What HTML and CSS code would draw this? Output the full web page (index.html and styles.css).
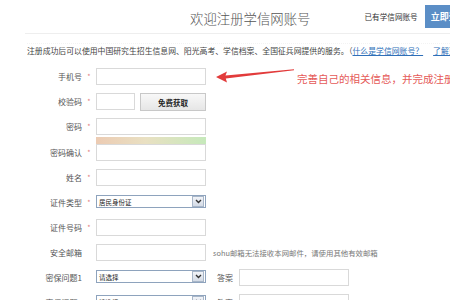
FILE: index.html
```html
<!DOCTYPE html>
<html>
<head>
  <link rel="stylesheet" href="styles.css">
</head>
<body>
  <div class="page">
    <div class="header">
      <h1 class="title">欢迎注册学信网账号</h1>
      <span class="has-account">已有学信网账号</span>
      <a class="login-btn">立即登录</a>
    </div>
    <p class="intro">注册成功后可以使用中国研究生招生信息网、阳光高考、学信档案、全国征兵网提供的服务。（<a class="link">什么是学信网账号？</a><a class="link more">了解更多</a></p>

    <div class="form">
      <div class="row">
        <label class="label">手机号</label><span class="star">*</span>
        <input class="field" type="text">
      </div>
      <div class="row">
        <label class="label">校验码</label><span class="star">*</span>
        <input class="field short" type="text">
        <button class="code-btn">免费获取</button>
      </div>
      <div class="row pw-row">
        <label class="label">密码</label><span class="star">*</span>
        <div class="pw-col">
          <input class="field" type="password">
          <div class="strength"></div>
        </div>
      </div>
      <div class="row">
        <label class="label">密码确认</label><span class="star">*</span>
        <input class="field" type="password">
      </div>
      <div class="row">
        <label class="label">姓名</label><span class="star">*</span>
        <input class="field" type="text">
      </div>
      <div class="row">
        <label class="label">证件类型</label><span class="star">*</span>
        <div class="select"><span class="select-text">居民身份证</span><span class="select-arrow"><svg width="7" height="5" viewBox="0 0 7 5"><path d="M1 1l2.5 2.5L6 1" fill="none" stroke="#333" stroke-width="1.4"/></svg></span></div>
      </div>
      <div class="row">
        <label class="label">证件号码</label><span class="star">*</span>
        <input class="field" type="text">
      </div>
      <div class="row">
        <label class="label">安全邮箱</label><span class="star"></span>
        <input class="field" type="text">
        <span class="hint">sohu邮箱无法接收本网邮件，请使用其他有效邮箱</span>
      </div>
      <div class="row">
        <label class="label">密保问题1</label><span class="star"></span>
        <div class="select"><span class="select-text">请选择</span><span class="select-arrow"><svg width="7" height="5" viewBox="0 0 7 5"><path d="M1 1l2.5 2.5L6 1" fill="none" stroke="#333" stroke-width="1.4"/></svg></span></div>
        <span class="answer-label">答案</span>
        <input class="field" type="text">
      </div>
      <div class="row">
        <label class="label">密保问题2</label><span class="star"></span>
        <div class="select"><span class="select-text">请选择</span><span class="select-arrow"><svg width="7" height="5" viewBox="0 0 7 5"><path d="M1 1l2.5 2.5L6 1" fill="none" stroke="#333" stroke-width="1.4"/></svg></span></div>
        <span class="answer-label">答案</span>
        <input class="field" type="text">
      </div>
    </div>

    <!-- 标注：红色箭头和提示 -->
    <svg class="arrow" width="84" height="16" viewBox="0 0 84 16">
      <path d="M0 9L11 3.5L9.5 7.6L78 1.2L78 2.2L9.8 10.4L11 14.5Z" fill="#e23b3b"/>
    </svg>
    <span class="note">完善自己的相关信息，并完成注册</span>
  </div>
</body>
</html>
```

FILE: styles.css
```css
body {
  margin: 0;
  background: #fff;
  font-family: "Noto Sans CJK SC", "Liberation Sans", sans-serif;
  color: #555;
  overflow: hidden;
}
.page {
  position: relative;
  width: 450px;
  height: 300px;
}
.header {
  display: flex;
  align-items: center;
  height: 33px;
  margin-left: 25px;
  border-bottom: 1px solid #eee;
  white-space: nowrap;
}
.title {
  margin: 0 0 0 165px;
  font-size: 13.4px;
  font-weight: 300;
  color: #555;
  position: relative;
  top: 1px;
}
.has-account {
  margin-left: 54px;
  font-size: 7.6px;
  color: #333;
}
.login-btn {
  margin-left: 7px;
  align-self: flex-start;
  margin-top: 5px;
  height: 23px;
  line-height: 23px;
  padding: 0 8px 0 6px;
  background: #5b8ec6;
  color: #fff;
  font-size: 9px;
  font-weight: bold;
}
.intro {
  margin: 9px 0 0 27px;
  font-size: 7.85px;
  line-height: 11px;
  color: #444;
  white-space: nowrap;
  padding-top: 1px;
  border-top: 1px dotted #f3f3f3;
}
.link {
  color: #2f6fb8;
  text-decoration: underline;
}
.more {
  margin-left: 10px;
}
.form {
  margin-top: 12px;
}
.row {
  display: flex;
  align-items: flex-start;
  height: 25px;
}
.pw-row {
  height: 26px;
}
.label {
  width: 82px;
  text-align: right;
  font-size: 8px;
  line-height: 17px;
  color: #555;
}
.star {
  width: 14px;
  text-align: center;
  font-size: 7px;
  line-height: 17px;
  color: #e27c7c;
}
.field {
  box-sizing: border-box;
  width: 110px;
  height: 17px;
  margin: 0;
  padding: 0 3px;
  border: 1px solid #d9d9d9;
  border-radius: 0;
  background: #fff;
  outline: none;
}
.field.short {
  width: 39px;
}
.code-btn {
  box-sizing: border-box;
  width: 66px;
  height: 18px;
  margin: 0 0 0 5px;
  padding: 0;
  border: 1px solid #c8c8c8;
  border-radius: 0;
  background: linear-gradient(#f8f8f8, #e6e6e6);
  font-family: inherit;
  font-size: 7.5px;
  font-weight: bold;
  color: #222;
}
.pw-col {
  display: flex;
  flex-direction: column;
}
.strength {
  width: 110px;
  height: 7px;
  margin-top: 2px;
  background: linear-gradient(to right, #eccbb3, #e9e0c2 45%, #c6e9bb);
}
.select {
  box-sizing: border-box;
  display: flex;
  align-items: center;
  width: 110px;
  height: 13px;
  margin-top: 1px;
  border: 1px solid #8ea3bd;
  background: #fff;
}
.select-text {
  flex: 1;
  padding-left: 2px;
  font-size: 6.5px;
  color: #222;
}
.select-arrow {
  display: flex;
  align-items: center;
  justify-content: center;
  width: 10px;
  height: 9px;
  margin-right: 1px;
  border: 1px solid #a8b6c8;
  background: linear-gradient(#f2f4f8, #d4dbe6);
}
.hint {
  margin-left: 7px;
  font-size: 7.4px;
  line-height: 17px;
  color: #777;
  white-space: nowrap;
}
.answer-label {
  width: 33px;
  padding-left: 11px;
  box-sizing: border-box;
  font-size: 8px;
  line-height: 17px;
  color: #555;
}
.arrow {
  position: absolute;
  left: 216px;
  top: 68px;
}
.note {
  position: absolute;
  left: 297px;
  top: 72px;
  font-size: 10.5px;
  line-height: 14px;
  color: #e55a58;
  white-space: nowrap;
}
```
